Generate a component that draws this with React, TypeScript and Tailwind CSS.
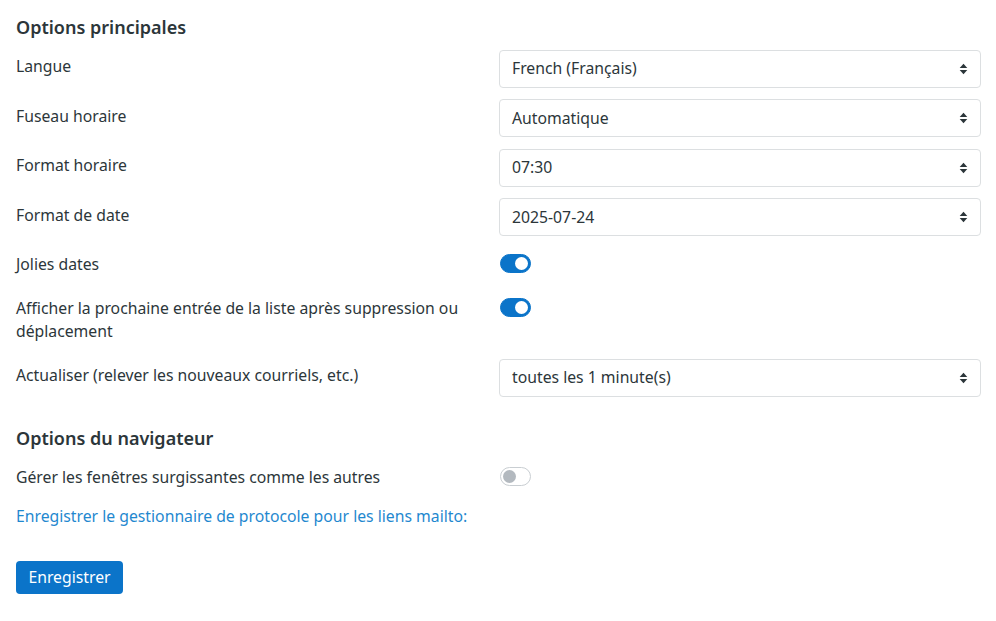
import React from "react";

const FONT = "font-['Noto_Sans','Open_Sans',sans-serif]";

function SortArrows() {
  return (
    <svg width="9" height="12" viewBox="0 0 9 12" className="shrink-0">
      <path d="M4.5 0.8 L8.3 5 H0.7 Z" fill="#2c363a" />
      <path d="M4.5 11.2 L8.3 7 H0.7 Z" fill="#2c363a" />
    </svg>
  );
}

function SelectBox({ value }: { value: string }) {
  return (
    <div className="flex h-[38px] w-full items-center justify-between rounded-[4px] border border-[#dcdfe1] bg-white pl-3 pr-[12px] text-[15.75px] text-[#2c363a]">
      <span>{value}</span>
      <SortArrows />
    </div>
  );
}

function Toggle({ on }: { on: boolean }) {
  return on ? (
    <div className="flex h-[19px] w-[31px] items-center justify-end rounded-full border border-[#0b74c9] bg-[#0b74c9] px-[2px]">
      <div className="h-[13px] w-[13px] rounded-full bg-white" />
    </div>
  ) : (
    <div className="flex h-[19px] w-[31px] items-center justify-start rounded-full border border-[#c9ced2] bg-white px-[2px]">
      <div className="h-[13px] w-[13px] rounded-full bg-[#b3b9bf]" />
    </div>
  );
}

function SelectRow({ label, value }: { label: string; value: string }) {
  return (
    <div className="grid grid-cols-[483px_1fr] py-[5.75px]">
      <div className="pr-4 pt-[5.5px]">{label}</div>
      <SelectBox value={value} />
    </div>
  );
}

function ToggleRow({ label, on }: { label: string; on: boolean }) {
  return (
    <div className="grid grid-cols-[483px_1fr] py-[10.5px]">
      <div className="pr-6">{label}</div>
      <div className="pl-[1px] pt-[1.5px]">
        <Toggle on={on} />
      </div>
    </div>
  );
}

const GENERAL = [
  { label: "Langue", value: "French (Français)" },
  { label: "Fuseau horaire", value: "Automatique" },
  { label: "Format horaire", value: "07:30" },
  { label: "Format de date", value: "2025-07-24" },
];

export default function App() {
  return (
    <div className={`min-h-screen bg-white px-4 pt-[14px] text-[15.75px] leading-[23px] text-[#2c363a] ${FONT}`}>
      <div className="w-[965px]">
        {/* Options principales */}
        <h2 className="mb-1 text-[18px] font-semibold leading-[26px]">Options principales</h2>
        {GENERAL.map((r) => (
          <SelectRow key={r.label} label={r.label} value={r.value} />
        ))}
        <ToggleRow label="Jolies dates" on />
        <ToggleRow label="Afficher la prochaine entrée de la liste après suppression ou déplacement" on />
        <SelectRow label="Actualiser (relever les nouveaux courriels, etc.)" value="toutes les 1 minute(s)" />

        {/* Options du navigateur */}
        <h2 className="mb-1 mt-[22.5px] text-[18px] font-semibold leading-[26px]">Options du navigateur</h2>
        <ToggleRow label="Gérer les fenêtres surgissantes comme les autres" on={false} />
        <div className="pt-[5.5px]">
          <a className="text-[#1f88cf]">Enregistrer le gestionnaire de protocole pour les liens mailto:</a>
        </div>

        <button className="mt-[33.5px] h-[33px] w-[107px] rounded-[4px] bg-[#0b74c9] text-[15.75px] text-white">
          Enregistrer
        </button>
      </div>
    </div>
  );
}
